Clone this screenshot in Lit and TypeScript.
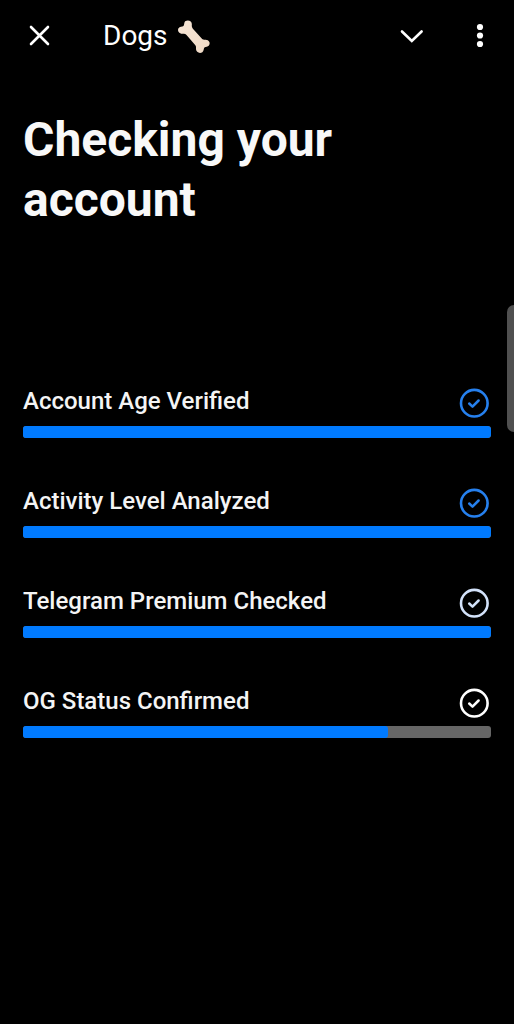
import { LitElement, html, css } from "lit";
import { customElement, property } from "lit/decorators.js";

interface Check {
  id: string;
  label: string;
  value: number;
  tone: "blue" | "pale" | "white";
}

const CHECKS: Check[] = [
  { id: "age", label: "Account Age Verified", value: 100, tone: "blue" },
  { id: "activity", label: "Activity Level Analyzed", value: 100, tone: "blue" },
  { id: "premium", label: "Telegram Premium Checked", value: 100, tone: "pale" },
  { id: "og", label: "OG Status Confirmed", value: 78, tone: "white" },
];

@customElement("check-row")
export class CheckRow extends LitElement {
  @property({ attribute: false }) check!: Check;

  static styles = css`
    :host {
      display: block;
    }
    .head {
      display: flex;
      align-items: flex-start;
      justify-content: space-between;
      height: 34px;
      margin-bottom: 6px;
    }
    .label {
      font-size: 24px;
      line-height: 30px;
      font-weight: 500;
      color: #f4f4f4;
    }
    .icon {
      flex: none;
      width: 30px;
      height: 30px;
      margin: 2px;
      fill: none;
      stroke: currentColor;
      stroke-linecap: round;
      stroke-linejoin: round;
    }
    .blue {
      color: #2680ee;
    }
    .pale {
      color: #d3e2fa;
    }
    .white {
      color: #ffffff;
    }
    .bar {
      display: block;
      appearance: none;
      width: 100%;
      height: 12px;
      border: 0;
      border-radius: 3px;
      overflow: hidden;
      background: #666666;
    }
    .bar::-webkit-progress-bar {
      background: #666666;
    }
    .bar::-webkit-progress-value {
      background: #007aff;
      border-radius: 0 3px 3px 0;
    }
  `;

  render() {
    const { id, label, value, tone } = this.check;
    return html`
      <div class="head">
        <label class="label" for=${id}>${label}</label>
        <svg class="icon ${tone}" viewBox="0 0 30 30" aria-hidden="true">
          <circle cx="15.3" cy="15.2" r="13.3" stroke-width="2.6" />
          <path d="M10.2 15.5 L13.5 18.6 L19.6 12.5" stroke-width="2.5" />
        </svg>
      </div>
      <progress class="bar" id=${id} max="100" value=${value}></progress>
    `;
  }
}

@customElement("app-root")
export class AppRoot extends LitElement {
  static styles = css`
    :host {
      display: block;
      position: relative;
      min-height: 100vh;
      background: #000000;
      color: #ffffff;
      font-family: Roboto, "Liberation Sans", sans-serif;
    }
    .bar {
      display: flex;
      align-items: center;
      height: 72px;
      padding: 0 14px 0 19px;
    }
    .button {
      display: flex;
      align-items: center;
      justify-content: center;
      width: 40px;
      height: 40px;
      padding: 0;
      border: 0;
      background: none;
      color: inherit;
    }
    .glyph {
      width: 40px;
      height: 40px;
      fill: none;
      stroke: currentColor;
      stroke-width: 2.6;
      stroke-linecap: round;
    }
    .dots {
      fill: currentColor;
      stroke: none;
    }
    .title {
      display: flex;
      align-items: center;
      gap: 8px;
      flex: 1;
      margin: 0 0 0 44px;
      font-size: 28px;
      line-height: 42px;
      font-weight: 400;
    }
    .bone {
      width: 35px;
      height: 35px;
    }
    .actions {
      display: flex;
      gap: 28px;
    }
    .content {
      padding: 38px 23px;
    }
    .heading {
      margin: 0 0 156px;
      font-size: 48px;
      line-height: 60px;
      font-weight: 700;
      color: #f8f8f8;
    }
    .checks {
      display: grid;
      gap: 48px;
      margin: 0;
      padding: 0;
      list-style: none;
    }
    .handle {
      position: absolute;
      top: 305px;
      right: 0;
      width: 7px;
      height: 127px;
      border-radius: 7px 0 0 7px;
      background: #505050;
    }
  `;

  render() {
    return html`
      <header class="bar">
        <button class="button" aria-label="Close">
          <svg class="glyph" viewBox="0 0 40 40">
            <path d="M12 11 L29 28 M29 11 L12 28" />
          </svg>
        </button>
        <h2 class="title">
          Dogs
          <svg class="bone" viewBox="0 0 34 34" aria-label="bone" role="img">
            <defs>
              <linearGradient id="ivory" x1="0" y1="0" x2="1" y2="1">
                <stop offset="0" stop-color="#f6e5d6" />
                <stop offset="1" stop-color="#efd9c4" />
              </linearGradient>
            </defs>
            <path
              fill="url(#ivory)"
              d="M9.2 2 C12.2 .6 15.6 2.2 15.4 5.2 C15.3 7 15.2 8 16.4 9.4 L25 19 C26.2 20.3 27.2 20.2 28.8 20.2 C32 20.2 33.8 23.4 32 25.8 C31 27 28.8 27 27.6 27.8 C26.8 29 27.2 31 25.6 32.2 C23.2 34 19.4 32.4 19.4 29.2 C19.4 27.6 19.8 26.6 18.6 25.2 L10.2 15.6 C9 14.3 8 14.4 6.4 14.4 C3.2 14.5 1 11.6 2.4 9 C3.6 7.2 6 7.6 7.3 6.8 C8.3 5.6 7.6 3 9.2 2 Z"
            />
          </svg>
        </h2>
        <div class="actions">
          <button class="button" aria-label="Collapse">
            <svg class="glyph" viewBox="0 0 40 40">
              <path d="M10 15.5 L19.8 25 L29.6 15.5" />
            </svg>
          </button>
          <button class="button" aria-label="More options">
            <svg class="glyph dots" viewBox="0 0 40 40">
              <circle cx="20" cy="11" r="3.1" />
              <circle cx="20" cy="19.5" r="3.1" />
              <circle cx="20" cy="28" r="3.1" />
            </svg>
          </button>
        </div>
      </header>
      <main class="content">
        <h1 class="heading">Checking your account</h1>
        <ul class="checks">
          ${CHECKS.map((check) => html`<li><check-row .check=${check}></check-row></li>`)}
        </ul>
      </main>
      <div class="handle"></div>
    `;
  }
}
